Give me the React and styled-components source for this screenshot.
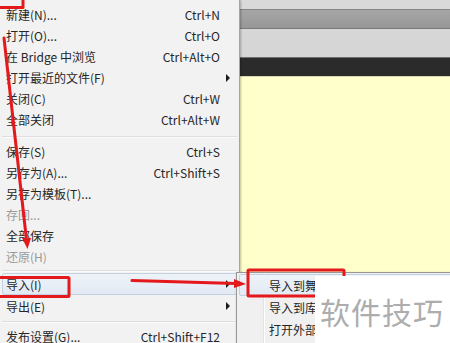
import React from "react";
import styled, { createGlobalStyle } from "styled-components";

const GlobalStyle = createGlobalStyle`
  html, body {
    margin: 0;
    padding: 0;
    background: #d9d9d9;
    overflow: hidden;
  }
  body {
    font-family: "Noto Sans CJK SC", "Noto Sans", sans-serif;
  }
`;

const fileMenu = [
  { label: "新建(N)...", keys: "Ctrl+N" },
  { label: "打开(O)...", keys: "Ctrl+O" },
  { label: "在 Bridge 中浏览", keys: "Ctrl+Alt+O" },
  { label: "打开最近的文件(F)", sub: true },
  { label: "关闭(C)", keys: "Ctrl+W" },
  { label: "全部关闭", keys: "Ctrl+Alt+W" },
  { sep: "top" },
  { label: "保存(S)", keys: "Ctrl+S" },
  { label: "另存为(A)...", keys: "Ctrl+Shift+S" },
  { label: "另存为模板(T)..." },
  { label: "存回...", disabled: true },
  { label: "全部保存" },
  { label: "还原(H)", disabled: true },
  { sep: "mid" },
  { label: "导入(I)", sub: true, active: true },
  { label: "导出(E)", sub: true, tall: true },
  { sep: "low" },
  { label: "发布设置(G)...", keys: "Ctrl+Shift+F12" },
];

const sepMargins = {
  top: "6px 2px 3px",
  mid: "3px 2px 1px",
  low: "4px 2px 3px",
};

const importMenu = [
  { label: "导入到舞台", active: true },
  { label: "导入到库" },
  { label: "打开外部库" },
];

export default function App() {
  return (
    <>
      <GlobalStyle />
      <Screen>
        <Menu>
          {fileMenu.map((item, i) =>
            item.sep ? (
              <Separator key={i} spacing={sepMargins[item.sep]} />
            ) : (
              <Row
                key={i}
                active={item.active}
                tall={item.active || item.tall}
                disabled={item.disabled}
              >
                <Label>{item.label}</Label>
                <Keys>{item.keys}</Keys>
                <ArrowCell>{item.sub && <Caret />}</ArrowCell>
              </Row>
            )
          )}
        </Menu>

        <Stage>
          <TopStrip />
          <ToolBar />
          <Panel />
          <DarkBar />
          <Canvas />
        </Stage>

        <SubMenu>
          {importMenu.map((item) => (
            <SubRow key={item.label} active={item.active}>
              {item.label}
            </SubRow>
          ))}
        </SubMenu>

        <Marks viewBox="0 0 450 343" width="450" height="343">
          <g fill="none" stroke="#e3191c" strokeWidth="3" strokeLinejoin="round" strokeLinecap="round">
            <path d="M-2 7.5 H23 V-2" />
            <path d="M4 38 L26.5 240" />
            <path d="M132 280.5 L236 283.5" />
            <rect x="-4" y="277.5" width="73" height="19" rx="1" />
            <rect x="248" y="270" width="96" height="26" rx="1" />
          </g>
          <g fill="#e3191c">
            <path d="M22 238 L31 238 L27.5 249 Z" />
            <path d="M234 279 L246 284 L234 288 Z" />
          </g>
        </Marks>

        <Watermark>软件技巧</Watermark>
      </Screen>
    </>
  );
}

const Screen = styled.div`
  position: relative;
  display: flex;
  width: 450px;
  height: 343px;
  overflow: hidden;
`;

const Menu = styled.div`
  width: 239px;
  flex: none;
  display: flex;
  flex-direction: column;
  padding-top: 4px;
  background: #f2f2f2;
  border-right: 1px solid #a4a4a4;
  box-shadow: 1px 0 2px rgba(0, 0, 0, 0.25);
  z-index: 1;
`;

const Row = styled.div`
  flex: none;
  display: flex;
  align-items: center;
  height: ${(p) => (p.tall ? "22px" : "21px")};
  margin: 0 2px;
  padding-left: 3px;
  font-size: 12px;
  line-height: 21px;
  color: ${(p) => (p.disabled ? "#9a9a9a" : "#262626")};
  white-space: nowrap;
  box-sizing: border-box;
  border: 1px solid ${(p) => (p.active ? "#c3d0df" : "transparent")};
  border-radius: 2px;
  background: ${(p) =>
    p.active ? "linear-gradient(#eef3f9, #e2eaf4)" : "transparent"};
`;

const Label = styled.span`
  flex: 1;
`;

const Keys = styled.span`
  color: #262626;
`;

const ArrowCell = styled.span`
  width: 16px;
  flex: none;
  display: flex;
  align-items: center;
  justify-content: center;
`;

const Caret = styled.span`
  width: 0;
  height: 0;
  border-top: 4px solid transparent;
  border-bottom: 4px solid transparent;
  border-left: 4px solid #1a1a1a;
`;

const Separator = styled.div`
  flex: none;
  height: 1px;
  margin: ${(p) => p.spacing};
  background: #dedede;
  border-bottom: 1px solid #fafafa;
`;

const Stage = styled.div`
  flex: 1;
  display: flex;
  flex-direction: column;
`;

const TopStrip = styled.div`
  height: 9px;
  background: #d9d9d9;
`;

const ToolBar = styled.div`
  height: 18px;
  background: linear-gradient(#a6a6a6, #979797);
  border-top: 1px solid #858585;
  border-bottom: 1px solid #7a7a7a;
`;

const Panel = styled.div`
  height: 28px;
  background: #d6d6d6;
`;

const DarkBar = styled.div`
  height: 18px;
  background: #2b2b2b;
  border-top: 1px solid #707070;
`;

const Canvas = styled.div`
  flex: 1;
  background: #ffffcc;
  border-top: 1px solid #d8d8b8;
`;

const SubMenu = styled.div`
  position: absolute;
  left: 236px;
  top: 272px;
  width: 230px;
  height: 90px;
  padding: 1px 0 0 2px;
  box-sizing: border-box;
  background: linear-gradient(90deg, #f0f0f0 26px, #e2e3e3 26px, #e2e3e3 27px, #ffffff 27px, #ffffff 28px, #f0f0f0 28px);
  border: 1px solid #979797;
  box-shadow: 1px 1px 3px rgba(0, 0, 0, 0.2);
  z-index: 2;
`;

const SubRow = styled.div`
  height: 22px;
  box-sizing: border-box;
  padding-left: 29px;
  font-size: 12px;
  line-height: 21px;
  color: #262626;
  border: 1px solid ${(p) => (p.active ? "#c3d0df" : "transparent")};
  border-radius: 2px;
  background: ${(p) =>
    p.active ? "linear-gradient(#eef3f9, #e2eaf4)" : "transparent"};
`;

const Marks = styled.svg`
  position: absolute;
  left: 0;
  top: 0;
  z-index: 3;
  overflow: visible;
`;

const Watermark = styled.div`
  position: absolute;
  left: 315px;
  top: 276px;
  width: 140px;
  height: 70px;
  padding: 16px 0 0 5px;
  box-sizing: border-box;
  background: #ffffff;
  color: #adadad;
  font-family: "Noto Sans CJK SC", sans-serif;
  font-size: 30px;
  line-height: 38px;
  letter-spacing: 1px;
  white-space: nowrap;
  z-index: 4;
`;
